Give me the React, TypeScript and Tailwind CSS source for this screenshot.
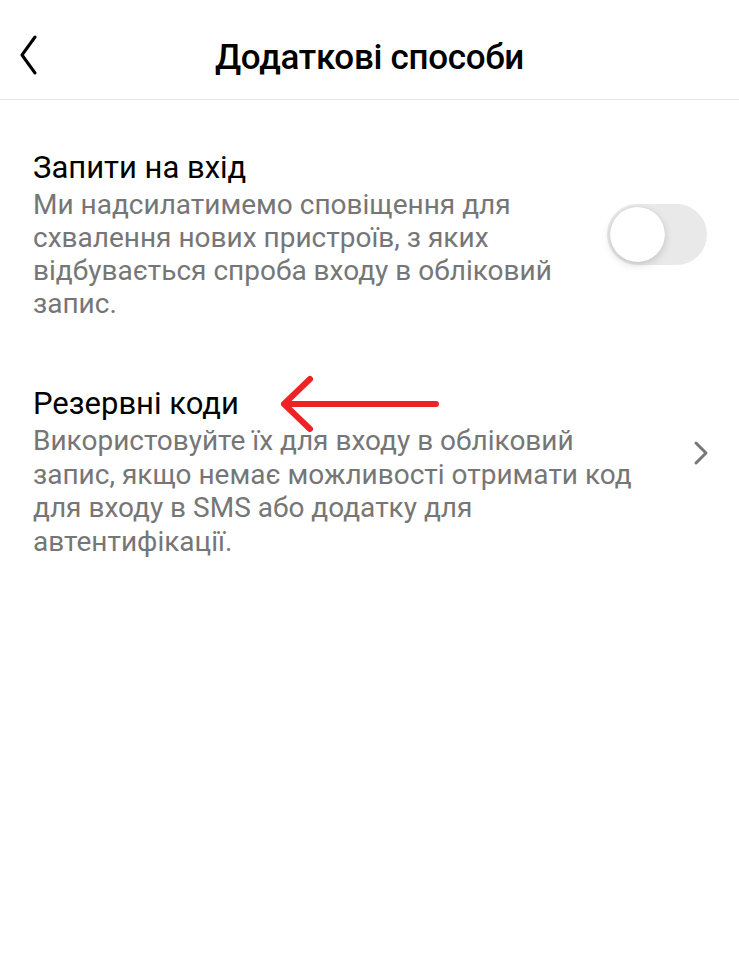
function Toggle() {
  return (
    <div className="flex h-[61px] w-[100px] shrink-0 items-center rounded-full bg-[#e9e9ea] px-[3px]">
      <div className="h-[55px] w-[55px] rounded-full bg-white shadow-[0_3px_8px_rgba(0,0,0,0.15),0_0_1px_rgba(0,0,0,0.16)]" />
    </div>
  );
}

export default function App() {
  return (
    <div className="relative min-h-[960px] w-[739px] bg-white font-['Roboto',sans-serif] text-black">
      <header className="relative flex h-[100px] items-center justify-center border-b border-[#e6e6e6]">
        <button type="button" className="absolute left-[19px] top-[35px]">
          <svg width="20" height="42" viewBox="0 0 20 42" fill="none">
            <path d="M16 2 L3 20 L16 38" stroke="#000" strokeWidth="3" strokeLinecap="round" strokeLinejoin="round" />
          </svg>
        </button>
        <h1 className="pt-[17px] text-[35px] font-medium leading-[40px] tracking-[-0.3px]">Додаткові способи</h1>
      </header>

      <section className="flex items-center gap-6 pl-[33px] pr-[32px] pt-[48px]">
        <div className="flex-1">
          <p className="text-[31px] leading-[40px]">Запити на вхід</p>
          <p className="text-[28px] leading-[33px] text-[#767676]">
            Ми надсилатимемо сповіщення для схвалення нових пристроїв, з яких відбувається спроба входу в обліковий
            запис.
          </p>
        </div>
        <Toggle />
      </section>

      <section className="flex items-start justify-between pl-[33px] pr-[30px] pt-[64px]">
        <div className="max-w-[612px] flex-1">
          <p className="text-[31px] leading-[40px]">Резервні коди</p>
          <p className="text-[28px] leading-[33.5px] text-[#767676]">
            Використовуйте їх для входу в обліковий запис, якщо немає можливості отримати код для входу в SMS або
            додатку для автентифікації.
          </p>
        </div>
        <svg width="16" height="26" viewBox="0 0 16 26" fill="none" className="mt-[56px] shrink-0">
          <path d="M3 3 L13 13 L3 23" stroke="#777" strokeWidth="3" strokeLinecap="round" strokeLinejoin="round" />
        </svg>
      </section>

      <svg className="absolute left-[278px] top-[374px]" width="164" height="60" viewBox="0 0 164 60" fill="none">
        <path
          d="M158 30 L6 30 M32 5 L6 30 L32 55"
          stroke="#ee2326"
          strokeWidth="6"
          strokeLinecap="round"
          strokeLinejoin="round"
        />
      </svg>
    </div>
  );
}
